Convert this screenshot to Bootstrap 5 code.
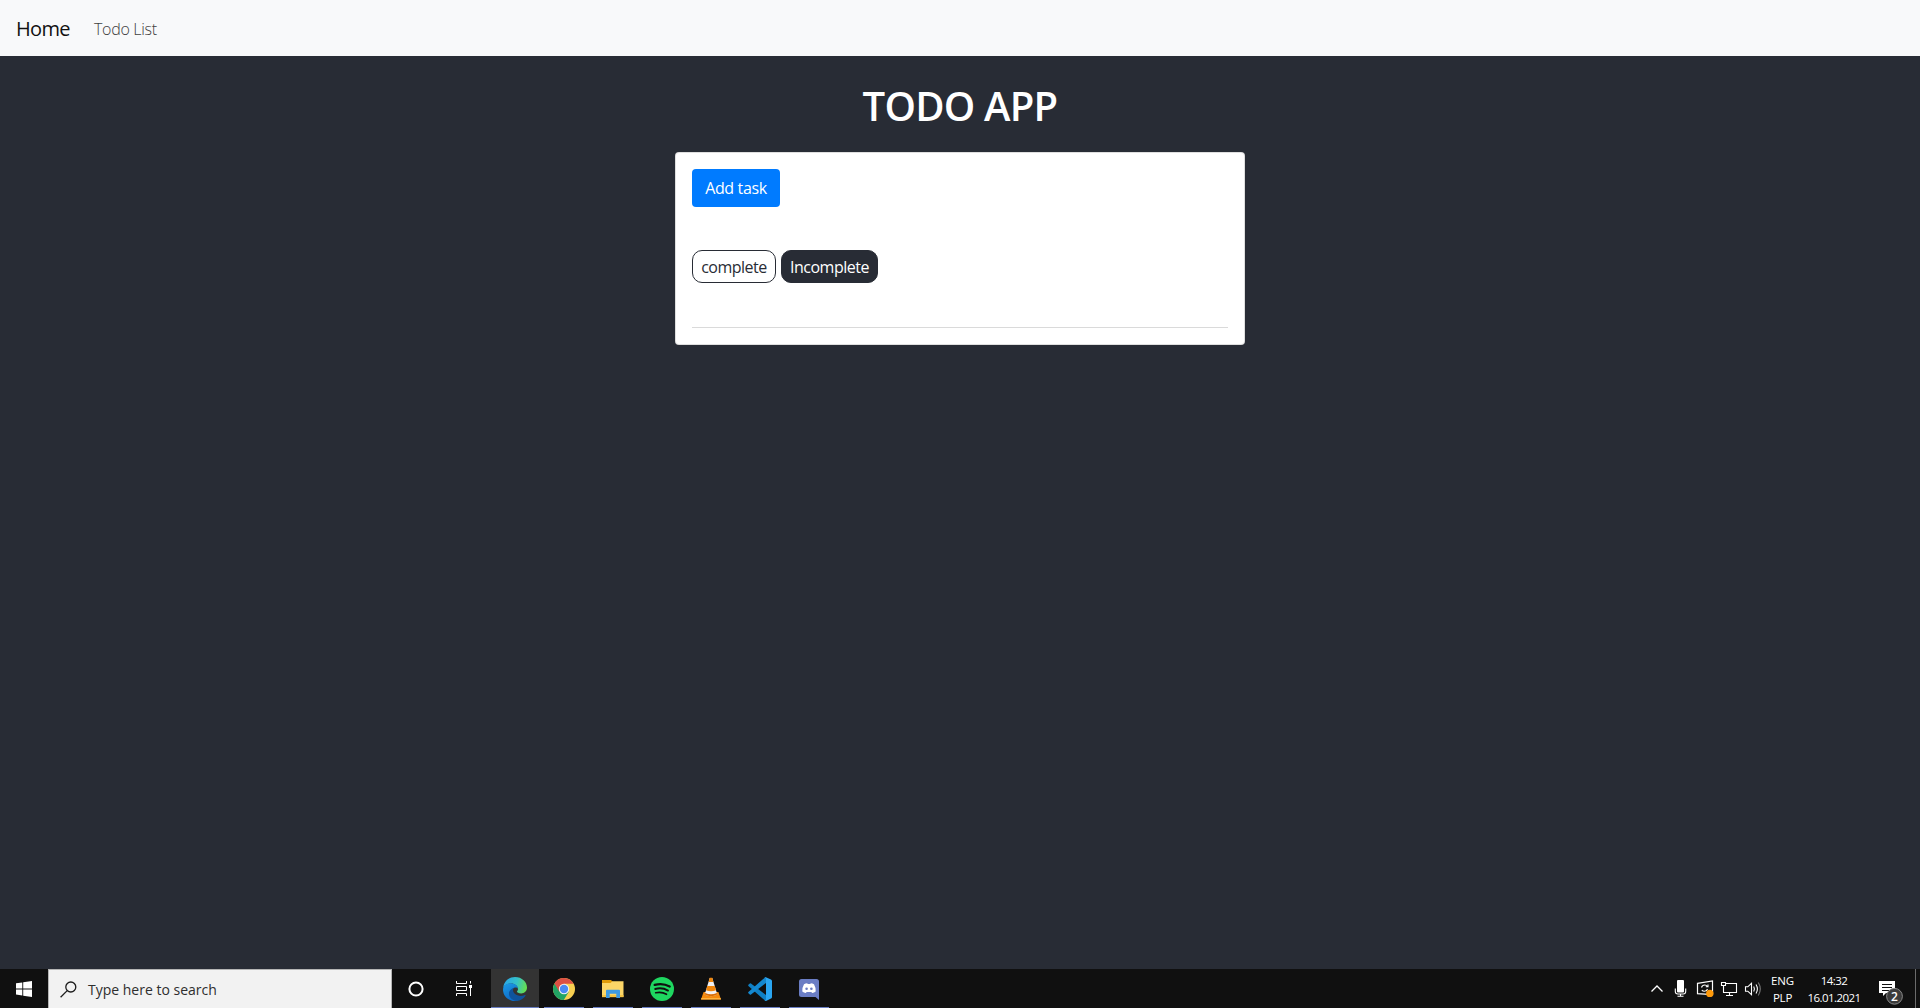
<!DOCTYPE html>
<html lang="en">
<head>
<meta charset="utf-8">
<title>Todo App</title>
<link rel="stylesheet" href="https://cdn.jsdelivr.net/npm/bootstrap@5.3.0/dist/css/bootstrap.min.css">
<script src="https://cdn.jsdelivr.net/npm/bootstrap@5.3.0/dist/js/bootstrap.bundle.min.js"></script>
<style>
body{background:#282c35;font-family:"Open Sans","Noto Sans",sans-serif;font-size:16px;overflow:hidden;color:#212529}
.top-nav{background:#f8f9fa;height:56px;padding:9px 16px 7px}
.top-nav .navbar-brand{width:54px;font-size:20px;line-height:30px;padding:5px 0;margin-right:16px;color:#111;white-space:nowrap;letter-spacing:-.7px;font-weight:400}
.top-nav .nav-link{padding:8px;color:#404040;line-height:24px;white-space:nowrap;letter-spacing:-.3px;font-weight:320}
.app-title{font-size:40px;line-height:48px;font-weight:600;color:#fff;margin:26px 0 22px;text-align:center;letter-spacing:-.75px}
.todo-card{width:570px;height:193px;margin:0 auto;border:1px solid rgba(0,0,0,.125);border-radius:4px;padding:16px;background:#fff}
.add-btn{width:88px;height:38px;background:#007bff;border:0;border-radius:4px;padding:1px 0 0;line-height:37px;letter-spacing:-.35px}
.pill-row{margin-top:43px;gap:5px}
.pill{height:33px;border:1px solid #282c35;border-radius:10px;line-height:33px;text-align:center;letter-spacing:-.5px}
.pill-a{width:84px;color:#282c35}
.pill-b{width:97px;color:#fff;background:#282c35}
.rule{border-top:1px solid #dadada;margin-top:44px}
.task-bar{height:39px;background:#101010;color:#fff}
.search-box{width:344px;background:#f2f2f2;border:solid #b5b5b5;border-width:1px 1px 0 1px;color:#2e2e2e;font-size:14px;padding-left:11px;gap:11px}
.sys{width:48px}
.app-slot{width:49px}
.app-slot::after{content:"";position:absolute;left:4px;width:40px;bottom:0;height:1px;background:#6a7fc4}
.app-slot.active{background:#333;width:48px;margin:0 1px 0 3px}
.app-slot.active::after{left:0;width:48px}
.app-slot:not(.active){padding-right:2px}
.lang,.clock{font-size:11.5px;line-height:17px;text-align:center;padding-top:3px}
.lang{width:35px;letter-spacing:-.2px}
.clock{width:68px;letter-spacing:-.55px}
.peek{width:5px;border-left:1px solid #6b6b6b}
svg{display:block;flex:none}
</style>
</head>
<body class="vh-100 d-flex flex-column">
<nav class="navbar top-nav justify-content-start flex-nowrap">
  <a class="navbar-brand" href="#">Home</a>
  <a class="nav-link" href="#">Todo List</a>
</nav>
<main class="flex-grow-1">
  <h1 class="app-title">TODO APP</h1>
  <div class="todo-card">
    <button class="btn btn-primary add-btn d-block">Add task</button>
    <div class="d-flex pill-row">
      <div class="pill pill-a">complete</div>
      <div class="pill pill-b">Incomplete</div>
    </div>
    <div class="rule"></div>
  </div>
</main>
<footer class="task-bar d-flex">
  <div class="sys">
    <svg width="48" height="39"><path d="M16 14.300l6.300-.9v6.100H16zM23.200 13.200l8.800-1.200v7.500h-8.800zM16 20.400h6.300v6.100l-6.300-.9zM23.200 20.400H32V28l-8.800-1.300z" fill="#fff"/></svg>
  </div>
  <div class="search-box d-flex align-items-center">
    <svg width="17" height="17" viewBox="0 0 17 17" fill="none" stroke="#1c1c1c" stroke-width="1.300"><circle cx="10.800" cy="6" r="5"/><path d="M7.200 9.600L.6 16.200"/></svg>
    <span>Type here to search</span>
  </div>
  <div class="sys"><svg width="48" height="39"><circle cx="24" cy="20" r="6.600" fill="none" stroke="#fff" stroke-width="2"/></svg></div>
  <div class="sys"><svg width="48" height="39" fill="none" stroke="#fff" stroke-width="1"><path d="M16.500 12v2.500h10V12M16.500 27v-2.500h10V27M16.500 17.500h10v4h-10z"/><path d="M30.500 12v2.500M30.500 19v8"/><path d="M29 16h3v3h-3z" fill="#fff" stroke="none"/></svg></div>

  <div class="app-slot active position-relative d-flex align-items-center justify-content-center">
    <svg width="24" height="24" viewBox="0 0 24 24">
      <defs>
        <linearGradient id="eg1" x1="0" y1=".3" x2="1" y2=".5"><stop offset="0" stop-color="#2aa6e8"/><stop offset=".55" stop-color="#35c1c8"/><stop offset="1" stop-color="#66e04f"/></linearGradient>
        <linearGradient id="eg2" x1="0" y1="0" x2=".4" y2="1"><stop offset="0" stop-color="#1c9be6"/><stop offset="1" stop-color="#0d6cc8"/></linearGradient>
      </defs>
      <path d="M.3 10.500C1 4.300 6 0 12 0c7 0 12 5 12 10.600 0 3.600-2.700 5.800-5.800 5.800-2.800 0-4.500-.9-4.200-1.800.3-.7 1-1.200 1-2.600 0-2.900-3-5.500-7-5.500-4 0-6.700 2-7.700 4z" fill="url(#eg1)"/>
      <path d="M.2 10.700C1 8 4 6 7.800 6.200c4 .2 7.200 2.700 7.200 5.500-.6-.8-2-1.500-3.300-1.100-2.400.7-3.800 3.100-3.200 6 .6 3.200 3.200 5.800 6.500 6.900C8 25.500.5 21 0 13z" fill="url(#eg2)"/>
      <path d="M11 10.800c-3 1-5.300 3.200-5 6.500.3 3.500 3.400 6.300 8 6.600 3.500-.3 6.700-2.300 8.500-5.200.3-.6-.1-.9-.6-.7-4.900 2.200-10 .3-11.500-2.900-.7-1.700-.4-3.400.6-4.300z" fill="#0f539c"/>
    </svg>
  </div>
  <div class="app-slot position-relative d-flex align-items-center justify-content-center">
    <svg width="22" height="22" viewBox="0 0 22 22">
      <circle cx="11" cy="11" r="11" fill="#f8cf50"/>
      <path d="M1.470 5.500A11 11 0 0 0 10.800 22l5-8.300L11 11z" fill="#21a464"/>
      <path d="M1.470 5.500A11 11 0 0 1 20.530 5.700H11L6.300 13.700z" fill="#dc5044"/>
      <circle cx="11" cy="11" r="5.200" fill="#f4f4f4"/><circle cx="11" cy="11" r="4.200" fill="#4a8af4"/>
    </svg>
  </div>
  <div class="app-slot position-relative d-flex align-items-center justify-content-center">
    <svg width="22" height="20" viewBox="0 0 22 20">
      <path d="M0 1h9l1.500 1.500V6H0z" fill="#e09b09"/>
      <path d="M0 4h8.500l2-1.800H21.500V18H0z" fill="#fcd667"/>
      <path d="M0 16h21.500v2.200H0z" fill="#f5c343"/>
      <path d="M4 11.800q0-1 1-1h12q1 0 1 1V19h-3.700v-4.300H7.700V19H4z" fill="#3d9ae2"/>
    </svg>
  </div>
  <div class="app-slot position-relative d-flex align-items-center justify-content-center">
    <svg width="24" height="24" viewBox="0 0 24 24"><circle cx="12" cy="12" r="12" fill="#1ed760"/><g fill="none" stroke="#101010" stroke-linecap="round"><path d="M4.700 7.900c5-1.400 10.500-.9 15 1.600" stroke-width="2.300"/><path d="M5.200 12c4.300-1.200 9-.7 12.800 1.600" stroke-width="1.900"/><path d="M5.700 15.800c3.700-.9 7.500-.5 10.800 1.500" stroke-width="1.600"/></g></svg>
  </div>
  <div class="app-slot position-relative d-flex align-items-center justify-content-center">
    <svg width="20" height="23" viewBox="0 0 20 23">
      <path d="M2.600 15h14.800l2.600 7.500H0z" fill="#f58a0c"/><path d="M.3 21h19.400l.3 1.600H0z" fill="#ffb23a"/>
      <path d="M8.700 1h2.600l5 16.500q-6.300 3.500-12.600 0z" fill="#f1f1f1"/>
      <path d="M8.700.8h2.600l1.100 4.200H7.600z" fill="#f0850a"/>
      <path d="M6.300 9h7.400l1.300 4.300q-5 2-10 0z" fill="#f0850a"/>
      <path d="M4.200 16l-.5 1.600q6.300 3.500 12.600 0L15.800 16q-5.800 2.500-11.600 0z" fill="#d96d05"/>
    </svg>
  </div>
  <div class="app-slot position-relative d-flex align-items-center justify-content-center">
    <svg width="24" height="24" viewBox="0 0 24 24">
      <path d="M.4 7.800l1.400-1.300q.6-.4 1.200 0L18 18v5.800q-.9 0-1.500-.7L.4 8.900q-.5-.6 0-1.100z" fill="#0f7fc4"/>
      <path d="M.4 16.200l1.400 1.300q.6.400 1.200 0L18 6V.2q-.9 0-1.500.7L.4 15.100q-.5.600 0 1.100z" fill="#1488d0"/>
      <path d="M17.200 23.800q-.6-.2-1-.7 1.800.8 1.800-1.100V2q0-1.900-1.800-1.100.7-.9 1.700-.7L23 2.600q1 .5 1 1.500v15.800q0 1-1 1.500l-4.500 2.300q-.7.300-1.300.1z" fill="#2aa6f2"/>
    </svg>
  </div>
  <div class="app-slot position-relative d-flex align-items-center justify-content-center">
    <svg width="20" height="22" viewBox="0 0 20 22">
      <path d="M2.500 1h15Q20 1 20 3.500V22l-3.500-3h-14Q0 19 0 16.500v-13Q0 1 2.500 1z" fill="#6a7dc4"/>
      <path d="M5 6.300q1.600-1 3.200-1.100l.5.700h2.600l.5-.7q1.600.1 3.200 1.100 1.900 3.200 1.700 7.300-1.500 1.300-3.500 1.500l-.9-1.200H7.700l-.9 1.200q-2-.2-3.500-1.500Q3.100 9.500 5 6.300z" fill="#fff"/>
      <circle cx="7.600" cy="10.700" r="1.300" fill="#6a7dc4"/><circle cx="12.400" cy="10.700" r="1.300" fill="#6a7dc4"/>
    </svg>
  </div>

  <div class="d-flex ms-auto">
    <svg width="24" height="39" fill="none" stroke="#fff" stroke-width="1.300"><path d="M6.500 22.500L12 17l5.500 5.500"/></svg>
    <svg width="24" height="39"><rect x="8" y="11" width="7" height="12.500" rx="1" fill="#fff"/><path d="M6.300 19.500v3q0 2.500 2.500 2.500h5.400q2.500 0 2.500-2.500v-3M11.500 25v2M8.500 27.300h6" fill="none" stroke="#fff" stroke-width="1.100"/></svg>
    <svg width="24" height="39" fill="none" stroke="#fff" stroke-width="1.200"><path d="M4.500 14.300L19.500 12v13.500l-15-.8z"/><path d="M8.500 18.500q.8-2.500 3.300-2.500 1.700 0 2.700 1.500M15 15.500v2.200h-2.200M14.500 20q-.8 2.300-3 2.300-1.800 0-2.700-1.300" stroke-width="1.100"/><circle cx="16.800" cy="24.400" r="3.700" fill="#ff9a0a" stroke="none"/></svg>
    <svg width="24" height="39" fill="none" stroke="#fff" stroke-width="1.100"><path d="M9 14.500h10.500v9H6.500V18M12.500 23.500v3M9 26.500h7"/><path d="M4.500 13.500h4v3h-4zM6.500 16.500v2"/></svg>
    <svg width="24" height="39" fill="none" stroke="#fff" stroke-width="1.100"><path d="M4.500 17.800h2.300l3.700-3.500v11.400l-3.700-3.500H4.500z"/><path d="M12.700 17.500q1.500 2.500 0 5M15 15.500q2.800 4.500 0 9"/><path d="M17.300 13.500q4 6.500 0 13" stroke="#777"/></svg>
    <div class="lang">ENG<br>PLP</div>
    <div class="clock">14:32<br>16.01.2021</div>
    <svg width="47" height="39"><path d="M11 12h16v12H18l-3 3v-3h-4z" fill="#fff"/><path d="M14 15.500h10M14 18.500h10M14 21.500h7" stroke="#101010"/><circle cx="26.500" cy="27.300" r="7.900" fill="#3b3b3b" stroke="#8a8a8a"/><text x="26.500" y="31.500" text-anchor="middle" font-size="12" font-weight="600" fill="#fff">2</text></svg>
    <div class="peek"></div>
  </div>
</footer>
</body>
</html>
